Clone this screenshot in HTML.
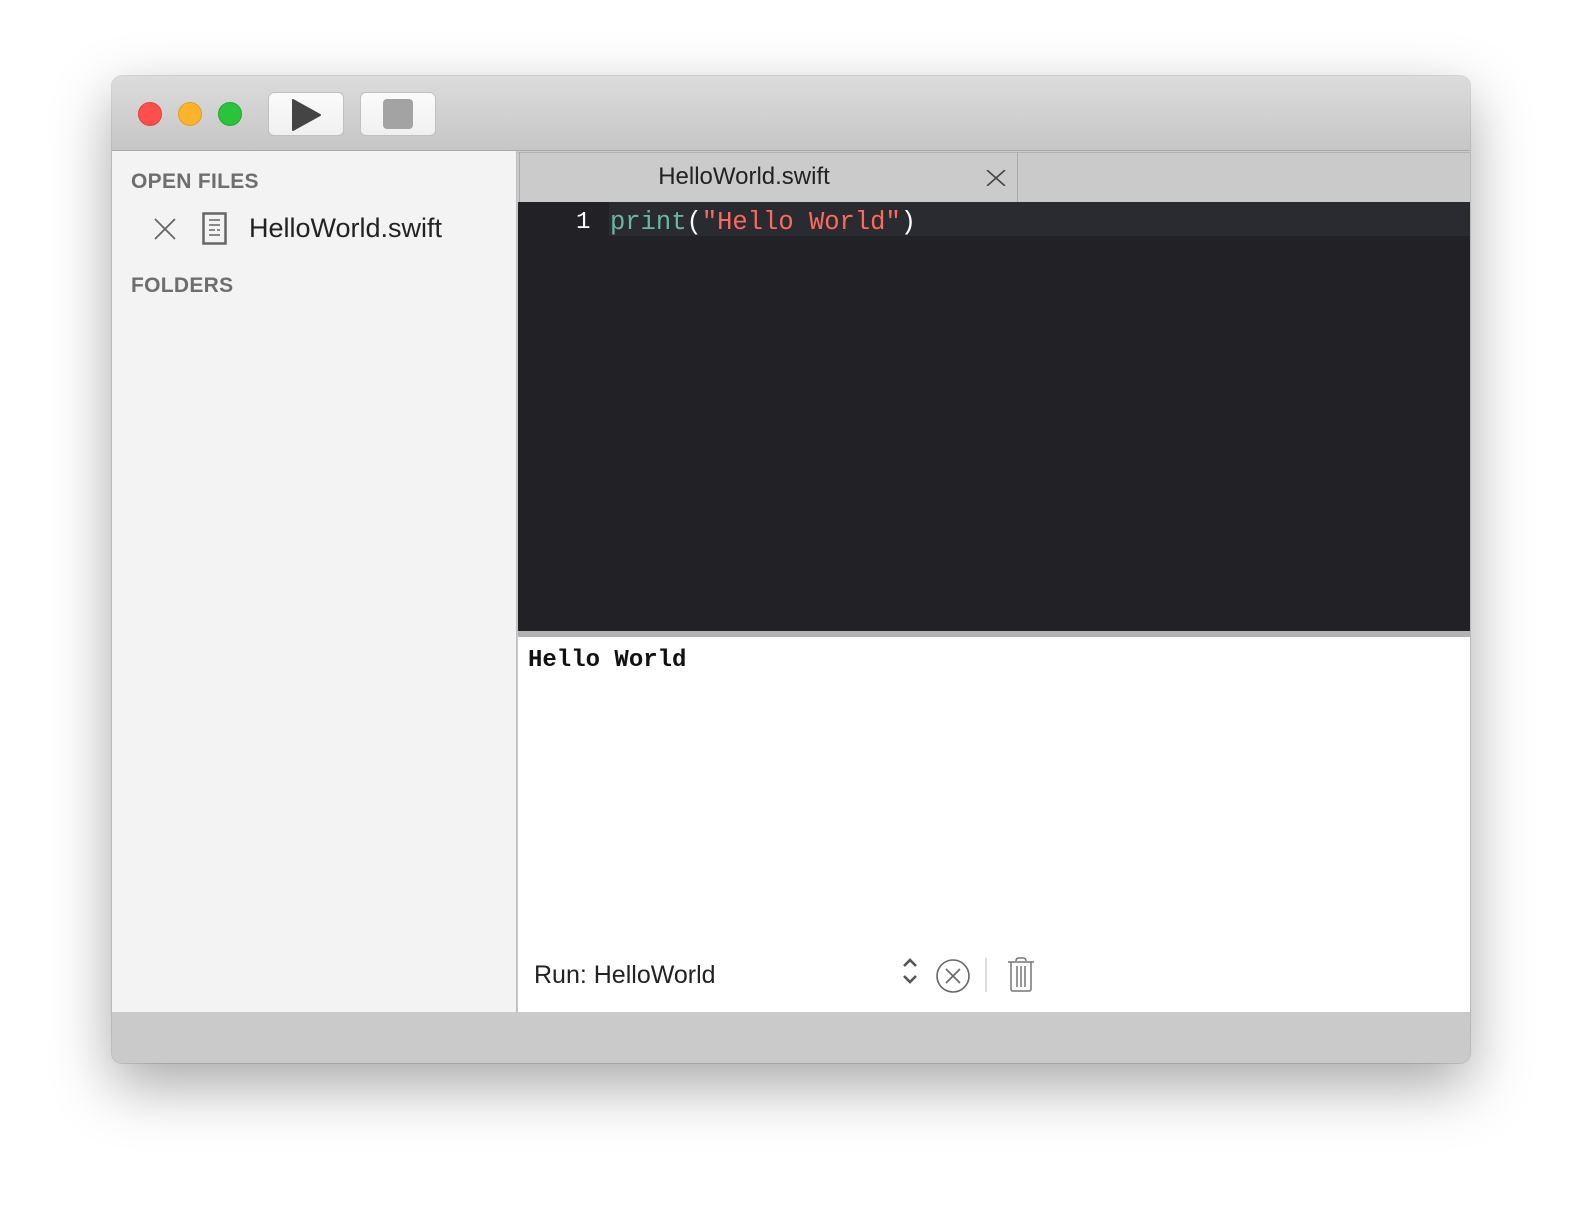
<!DOCTYPE html>
<html><head><meta charset="utf-8"><style>
*{margin:0;padding:0;box-sizing:border-box}
body{width:1582px;height:1212px;background:#fff;position:relative;overflow:hidden;font-family:"Liberation Sans",sans-serif}
.win{position:absolute;left:112px;top:76px;width:1358px;height:987px;border-radius:10px;background:#cacaca;box-shadow:0 22px 60px rgba(0,0,0,0.35),0 0 0 1px rgba(0,0,0,0.12);overflow:hidden}
.title{position:absolute;left:0;top:0;width:100%;height:75px;background:linear-gradient(#dcdcdc,#c6c6c6);border-bottom:1px solid #a9a9a9}
.tl{position:absolute;top:26px;width:24px;height:24px;border-radius:50%}
.btn{position:absolute;top:16px;width:76px;height:44px;border-radius:6px;background:linear-gradient(#fbfbfb,#f0f0f0);border:1px solid #c0c0c0}
.side{position:absolute;left:0;top:75px;width:405px;height:861px;background:#f3f3f3;border-right:1px solid #bdbdbd}
.tabbar{position:absolute;left:406px;top:76px;width:952px;height:50px;background:#cacaca;border-top:1px solid #b0b0b0}
.tab{position:absolute;left:1px;top:0;width:499px;height:50px;background:#cbcbcb;border-right:1px solid #aaa;border-left:1px solid #aaa}
.editor{position:absolute;left:406px;top:126px;width:952px;height:429px;background:#222226}
.hl{position:absolute;left:91px;top:0;right:0;height:34px;background:#2a2b30}
.mono{font-family:"Liberation Mono",monospace}
.sep{position:absolute;left:406px;top:555px;width:952px;height:6px;background:#b2b2b2}
.out{position:absolute;left:406px;top:561px;width:952px;height:375px;background:#fff}
</style></head><body>
<div class="win">
 <div class="title">
  <div class="tl" style="left:26px;background:#fe4f4c;border:1px solid #e0403d"></div>
  <div class="tl" style="left:66px;background:#fdb42a;border:1px solid #e09e22"></div>
  <div class="tl" style="left:106px;background:#2ac43c;border:1px solid #22a832"></div>
  <div class="btn" style="left:156px"><svg width="76" height="44" style="position:absolute;left:-1px;top:-1px"><path d="M25 8 L52 23 L25 38 Z" fill="#444" stroke="#444" stroke-width="2" stroke-linejoin="round"/></svg></div>
  <div class="btn" style="left:248px"><div style="position:absolute;left:22px;top:6px;width:30px;height:30px;border-radius:4px;background:#a3a3a3"></div></div>
 </div>
 <div class="side"></div>
 <div style="position:absolute;left:19px;top:94px;font-size:21px;font-weight:bold;color:#6e6e6e;letter-spacing:0.3px">OPEN FILES</div>
 <svg style="position:absolute;left:41px;top:142px" width="24" height="22"><path d="M2 1 L22 21 M22 1 L2 21" stroke="#666" stroke-width="1.8"/></svg>
 <svg style="position:absolute;left:90px;top:136px" width="26" height="33"><rect x="1.5" y="1.5" width="22" height="30" fill="none" stroke="#666" stroke-width="2.5"/><path d="M7 8h11M7 13h11M7 18h6M15 18h3M7 23h11" stroke="#666" stroke-width="1.6"/></svg>
 <div style="position:absolute;left:137px;top:137px;font-size:27px;color:#222">HelloWorld.swift</div>
 <div style="position:absolute;left:19px;top:198px;font-size:21px;font-weight:bold;color:#6e6e6e;letter-spacing:0.3px">FOLDERS</div>
 <div class="tabbar"><div class="tab">
  <div style="position:absolute;left:0;width:448px;text-align:center;top:10px;font-size:24px;color:#222">HelloWorld.swift</div>
  <svg style="position:absolute;left:466px;top:17px" width="20" height="16"><path d="M1 0 L19 16 M19 0 L1 16" stroke="#444" stroke-width="1.6"/></svg>
 </div></div>
 <div class="editor">
  <div class="hl"></div>
  <div class="mono" style="position:absolute;left:58px;top:6px;font-size:24px;color:#fff;line-height:30px">1</div>
  <div class="mono" style="position:absolute;left:92px;top:6px;font-size:25.5px;line-height:30px;white-space:pre;color:#fff"><span style="color:#67b7a4">print</span>(<span style="color:#fc6a5d">"Hello World"</span>)</div>
 </div>
 <div class="sep"></div>
 <div class="out">
  <div class="mono" style="position:absolute;left:10px;top:10px;font-size:24px;font-weight:bold;color:#111">Hello World</div>
  <div style="position:absolute;left:16px;top:324px;font-size:25px;color:#222">Run: HelloWorld</div>
  <svg style="position:absolute;left:384px;top:321px" width="16" height="26"><path d="M2 8 L8 2 L14 8 M2 18 L8 24 L14 18" fill="none" stroke="#555" stroke-width="2.6"/></svg>
  <svg style="position:absolute;left:416px;top:320px" width="38" height="38"><circle cx="19" cy="19" r="16" fill="none" stroke="#666" stroke-width="1.6"/><path d="M12 12 L26 26 M26 12 L12 26" stroke="#666" stroke-width="1.6"/></svg>
  <div style="position:absolute;left:467px;top:321px;width:2px;height:34px;background:#ddd"></div>
  <svg style="position:absolute;left:488px;top:320px" width="30" height="36"><path d="M10 4 Q10 1 13 1 H17 Q20 1 20 4 M2 5 H28 M5 5 V32 Q5 34 7 34 H23 Q25 34 25 32 V5 M11 9 V30 M15 9 V30 M19 9 V30" fill="none" stroke="#777" stroke-width="1.5"/></svg>
 </div>
</div>
</body></html>
